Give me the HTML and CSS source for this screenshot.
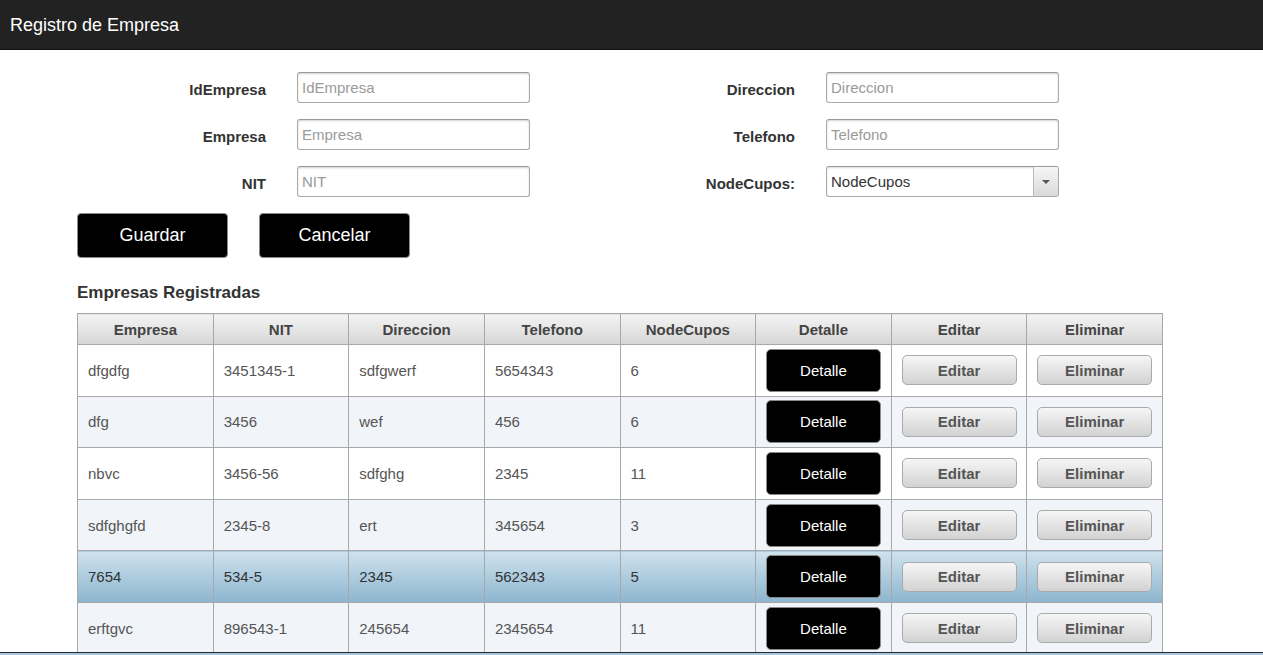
FILE: index.html
```html
<!DOCTYPE html>
<html lang="es">
<head>
<meta charset="utf-8">
<title>Registro de Empresa</title>
<link rel="stylesheet" href="styles.css">
</head>
<body>
<header class="topbar"><span class="title">Registro de Empresa</span></header>
<main class="content">
  <form class="form-grid">
    <label class="lbl">IdEmpresa</label><input class="txt" placeholder="IdEmpresa">
    <label class="lbl">Direccion</label><input class="txt" placeholder="Direccion">
    <label class="lbl">Empresa</label><input class="txt" placeholder="Empresa">
    <label class="lbl">Telefono</label><input class="txt" placeholder="Telefono">
    <label class="lbl">NIT</label><input class="txt" placeholder="NIT">
    <label class="lbl">NodeCupos:</label>
    <div class="select"><span class="select-text">NodeCupos</span><span class="select-btn"><span class="caret"></span></span></div>
  </form>
  <div class="actions">
    <button class="btn-black big">Guardar</button>
    <button class="btn-black big">Cancelar</button>
  </div>
  <h2 class="section-title">Empresas Registradas</h2>
  <table class="grid">
    <thead>
      <tr><th>Empresa</th><th>NIT</th><th>Direccion</th><th>Telefono</th><th>NodeCupos</th><th>Detalle</th><th>Editar</th><th>Eliminar</th></tr>
    </thead>
    <tbody>
      <tr><td>dfgdfg</td><td>3451345-1</td><td>sdfgwerf</td><td>5654343</td><td>6</td><td class="c"><button class="btn-black det">Detalle</button></td><td class="c"><button class="btn-gray">Editar</button></td><td class="c"><button class="btn-gray">Eliminar</button></td></tr>
      <tr class="alt"><td>dfg</td><td>3456</td><td>wef</td><td>456</td><td>6</td><td class="c"><button class="btn-black det">Detalle</button></td><td class="c"><button class="btn-gray">Editar</button></td><td class="c"><button class="btn-gray">Eliminar</button></td></tr>
      <tr><td>nbvc</td><td>3456-56</td><td>sdfghg</td><td>2345</td><td>11</td><td class="c"><button class="btn-black det">Detalle</button></td><td class="c"><button class="btn-gray">Editar</button></td><td class="c"><button class="btn-gray">Eliminar</button></td></tr>
      <tr class="alt"><td>sdfghgfd</td><td>2345-8</td><td>ert</td><td>345654</td><td>3</td><td class="c"><button class="btn-black det">Detalle</button></td><td class="c"><button class="btn-gray">Editar</button></td><td class="c"><button class="btn-gray">Eliminar</button></td></tr>
      <tr class="hover"><td>7654</td><td>534-5</td><td>2345</td><td>562343</td><td>5</td><td class="c"><button class="btn-black det">Detalle</button></td><td class="c"><button class="btn-gray">Editar</button></td><td class="c"><button class="btn-gray">Eliminar</button></td></tr>
      <tr class="alt"><td>erftgvc</td><td>896543-1</td><td>245654</td><td>2345654</td><td>11</td><td class="c"><button class="btn-black det">Detalle</button></td><td class="c"><button class="btn-gray">Editar</button></td><td class="c"><button class="btn-gray">Eliminar</button></td></tr>
    </tbody>
  </table>
</main>
<div class="taskbar"></div>
</body>
</html>
```
FILE: styles.css
```css
html, body {
  margin: 0;
  padding: 0;
  overflow: hidden;
  background: #ffffff;
  font-family: "Liberation Sans", Arial, sans-serif;
}

.topbar {
  height: 50px;
  background: #222222;
  display: flex;
  align-items: center;
  padding-left: 10px;
  box-sizing: border-box;
  border-bottom: 1px solid #111;
}
.title {
  color: #ffffff;
  font-size: 18px;
  margin-top: 1px;
}

.content {
  padding-left: 77px;
}

.form-grid {
  margin: 0;
  padding-top: 22px;
  display: grid;
  grid-template-columns: 220px 233px 296px 233px;
  grid-auto-rows: 31px;
  row-gap: 16px;
  align-items: center;
}
.lbl {
  text-align: right;
  padding-right: 31px;
  font-weight: bold;
  font-size: 15px;
  color: #333333;
  padding-top: 4px;
}
.txt {
  box-sizing: border-box;
  width: 233px;
  height: 31px;
  margin: 0;
  border: 1px solid #aaaaaa;
  border-top-color: #999;
  border-radius: 3px;
  box-shadow: inset 0 1px 2px rgba(0,0,0,0.18);
  padding: 0 4px;
  font-family: "Liberation Sans", Arial, sans-serif;
  font-size: 15px;
  color: #333;
  padding-bottom: 1px;
}
.txt::placeholder {
  color: #9a9a9a;
}
.select {
  box-sizing: border-box;
  width: 233px;
  height: 31px;
  border: 1px solid #aaaaaa;
  border-top-color: #999;
  border-radius: 3px;
  box-shadow: inset 0 1px 2px rgba(0,0,0,0.15);
  display: flex;
  align-items: stretch;
  background: #fff;
}
.select-text {
  flex: 1;
  font-size: 15px;
  color: #333;
  padding-left: 4px;
  display: flex;
  align-items: center;
  padding-bottom: 1px;
}
.select-btn {
  width: 24px;
  border-left: 1px solid #bbb;
  background: linear-gradient(#f6f6f6, #d9d9d9);
  display: flex;
  align-items: center;
  justify-content: center;
  border-radius: 0 2px 2px 0;
}
.caret {
  width: 0;
  height: 0;
  border-left: 4px solid transparent;
  border-right: 4px solid transparent;
  border-top: 4px solid #555;
}

.actions {
  display: flex;
  gap: 31px;
  margin-top: 16px;
}
.btn-black {
  background: #000000;
  color: #ffffff;
  border: 1px solid #8a8a8a;
  border-radius: 5px;
  font-family: "Liberation Sans", Arial, sans-serif;
  cursor: pointer;
  padding: 0;
}
.big {
  width: 151px;
  height: 45px;
  font-size: 18px;
  border-radius: 4px;
}

.section-title {
  margin: 25px 0 10px 0;
  font-size: 17px;
  font-weight: bold;
  color: #333333;
  line-height: 20px;
}

.grid {
  border-collapse: collapse;
  table-layout: fixed;
  width: 1086px;
  font-size: 15px;
  color: #555555;
}
.grid th {
  height: 30px;
  border: 1px solid #a8a8a8;
  background: linear-gradient(#f4f4f4, #d6d6d6);
  color: #444;
  font-weight: bold;
  font-size: 15px;
  text-align: center;
  padding: 0;
}
.grid td {
  height: 51.6px;
  border: 1px solid #a8a8a8;
  padding: 0 0 0 10px;
  text-align: left;
  box-sizing: border-box;
}
.grid td.c {
  padding: 0;
  text-align: center;
}
.grid tr.alt td {
  background: #f1f4f9;
}
.grid tr.hover td {
  background: linear-gradient(#cfe2ee, #8cb5cf);
  color: #333;
}
.det {
  width: 115px;
  height: 43px;
  font-size: 15px;
  vertical-align: middle;
}
.btn-gray {
  width: 115px;
  height: 30px;
  background: linear-gradient(#f6f6f6, #d2d2d2);
  border: 1px solid #aaaaaa;
  border-radius: 5px;
  color: #555;
  font-weight: bold;
  font-size: 15px;
  font-family: "Liberation Sans", Arial, sans-serif;
  padding: 0;
  vertical-align: middle;
}

.taskbar {
  position: fixed;
  left: 0;
  right: 0;
  bottom: 0;
  height: 2px;
  border-top: 1px solid #1e2a36;
  background: #a9c6df;
}
```
